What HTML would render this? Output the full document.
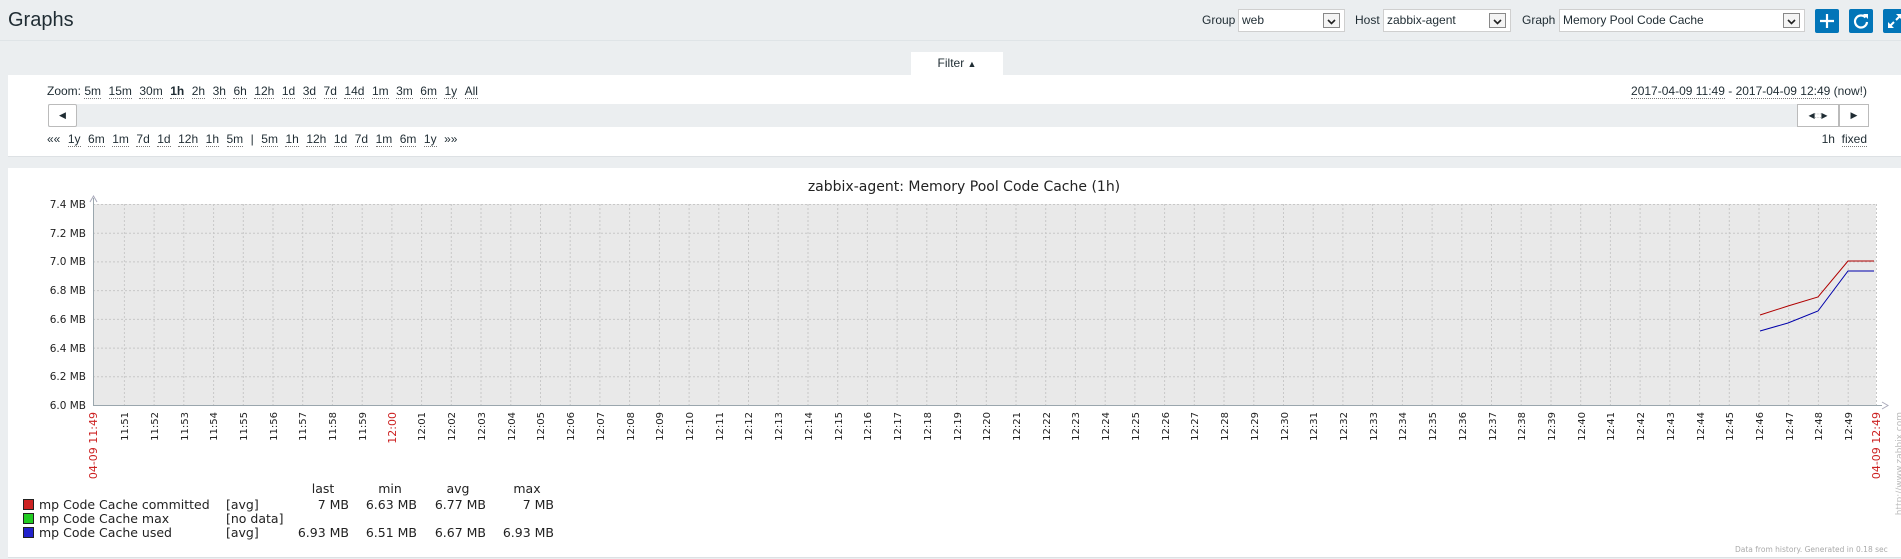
<!DOCTYPE html>
<html><head><meta charset="utf-8"><style>
*{box-sizing:border-box;margin:0;padding:0}
body{width:1901px;height:559px;background:#ebeef0;font-family:"Liberation Sans",Arial,sans-serif;font-size:12px;color:#1f2c33;position:relative;overflow:hidden}
.a{position:absolute}
h1{position:absolute;left:8px;top:9px;font-size:20px;font-weight:normal;color:#1f2c33}
.hline{left:0;top:40px;width:1901px;height:1px;background:#dfe4e7}
.sel{position:absolute;top:9px;height:23px;background:#fff;border:1px solid #cfcfcf;font-size:12px;line-height:21px;padding-left:3px}
.sel .ar{position:absolute;right:4px;top:3px;width:17px;height:15px;border:1px solid #888;background:#f4f4f4}
.lbl{position:absolute;top:9px;line-height:23px}
.btn{position:absolute;top:9px;width:24px;height:24px;background:#0275b8;border-radius:2px}
.box{background:#fff;border-bottom:1px solid #dde1e4}
.u{border-bottom:1px dotted #777}
.zr span{margin-right:7.5px}
</style></head><body>
<h1>Graphs</h1>
<div class="a hline"></div>
<div class="lbl" style="left:1202px">Group</div>
<div class="sel" style="left:1238px;width:107px">web<div class="ar"><svg width="15" height="13"><path d="M4 5l3.5 3.5L11 5" stroke="#222" stroke-width="1.6" fill="none"/></svg></div></div>
<div class="lbl" style="left:1355px">Host</div>
<div class="sel" style="left:1383px;width:128px">zabbix-agent<div class="ar"><svg width="15" height="13"><path d="M4 5l3.5 3.5L11 5" stroke="#222" stroke-width="1.6" fill="none"/></svg></div></div>
<div class="lbl" style="left:1522px">Graph</div>
<div class="sel" style="left:1559px;width:246px">Memory Pool Code Cache<div class="ar"><svg width="15" height="13"><path d="M4 5l3.5 3.5L11 5" stroke="#222" stroke-width="1.6" fill="none"/></svg></div></div>
<div class="btn" style="left:1815px"><svg width="24" height="24"><path d="M12 5v14M5 12h14" stroke="#fff" stroke-width="2.2"/></svg></div>
<div class="btn" style="left:1849px"><svg width="24" height="24"><path d="M16.5 8.5A6 6 0 1 0 18 13" stroke="#fff" stroke-width="2.2" fill="none"/><path d="M14 5h5v5z" fill="#fff"/></svg></div>
<div class="btn" style="left:1883px"><svg width="24" height="24"><path d="M6 18l5-5M18 6l-5 5" stroke="#fff" stroke-width="2"/><path d="M5 19v-6l6 6zM19 5v6l-6-6z" fill="#fff"/></svg></div>

<div class="a" style="left:911px;top:52px;width:92px;height:24px;background:#fff;text-align:center;line-height:23px;font-size:12px">Filter <span style="font-size:9px">&#9650;</span></div>
<div class="a box" style="left:8px;top:75px;width:1893px;height:82px"></div>
<div class="a zr" style="left:47px;top:84px;line-height:14px">Zoom: <span class="u">5m</span><span class="u">15m</span><span class="u">30m</span><span class="u" style="font-weight:bold">1h</span><span class="u">2h</span><span class="u">3h</span><span class="u">6h</span><span class="u">12h</span><span class="u">1d</span><span class="u">3d</span><span class="u">7d</span><span class="u">14d</span><span class="u">1m</span><span class="u">3m</span><span class="u">6m</span><span class="u">1y</span><span class="u">All</span></div>
<div class="a" style="right:34px;top:84px;line-height:14px"><span class="u">2017-04-09 11:49</span> - <span class="u">2017-04-09 12:49</span> (now!)</div>
<div class="a" style="left:48px;top:104px;width:1820px;height:23px;background:#ebeef0"></div>
<div class="a" style="left:48px;top:104px;width:29px;height:23px;background:#fff;border:1px solid #bbb;border-radius:2px;font-size:9px;text-align:center;line-height:21px">&#9664;</div>
<div class="a" style="left:1797px;top:104px;width:42px;height:23px;background:#fff;border:1px solid #bbb;font-size:8px;text-align:center;line-height:21px">&#9664;<span style="color:#999">:::</span>&#9654;</div>
<div class="a" style="left:1839px;top:104px;width:30px;height:23px;background:#fff;border:1px solid #bbb;font-size:9px;text-align:center;line-height:21px">&#9654;</div>
<div class="a zr" style="left:47px;top:132px;line-height:14px"><span>&laquo;&laquo;</span><span class="u">1y</span><span class="u">6m</span><span class="u">1m</span><span class="u">7d</span><span class="u">1d</span><span class="u">12h</span><span class="u">1h</span><span class="u">5m</span><span>|</span><span class="u">5m</span><span class="u">1h</span><span class="u">12h</span><span class="u">1d</span><span class="u">7d</span><span class="u">1m</span><span class="u">6m</span><span class="u">1y</span><span>&raquo;&raquo;</span></div>
<div class="a" style="right:34px;top:132px;line-height:14px">1h&nbsp;&nbsp;<span class="u">fixed</span></div>

<div class="a box" style="left:8px;top:168px;width:1893px;height:390px"></div>
<svg class="a" style="left:0;top:0" width="1901" height="559" font-family="DejaVu Sans,sans-serif">
<text x="964" y="191" font-size="14" text-anchor="middle" fill="#222">zabbix-agent: Memory Pool Code Cache (1h)</text>
<rect x="93" y="204" width="1783" height="201" fill="#e9e9e9"/>
<g stroke="#c8c8c8" stroke-dasharray="2,2" stroke-width="1">
<path d="M93 204.5H1876M93 233.2H1876M93 261.9H1876M93 290.6H1876M93 319.4H1876M93 348.1H1876M93 376.8H1876M1876.5 204V405"/>
<path d="M124.4 204V405M154.1 204V405M183.8 204V405M213.6 204V405M243.3 204V405M273 204V405M302.7 204V405M332.4 204V405M362.2 204V405M391.9 204V405M421.6 204V405M451.3 204V405M481 204V405M510.8 204V405M540.5 204V405M570.2 204V405M599.9 204V405M629.6 204V405M659.4 204V405M689.1 204V405M718.8 204V405M748.5 204V405M778.2 204V405M808 204V405M837.7 204V405M867.4 204V405M897.1 204V405M926.8 204V405M956.6 204V405M986.3 204V405M1016 204V405M1045.7 204V405M1075.4 204V405M1105.2 204V405M1134.9 204V405M1164.6 204V405M1194.3 204V405M1224 204V405M1253.8 204V405M1283.5 204V405M1313.2 204V405M1342.9 204V405M1372.6 204V405M1402.4 204V405M1432.1 204V405M1461.8 204V405M1491.5 204V405M1521.2 204V405M1551 204V405M1580.7 204V405M1610.4 204V405M1640.1 204V405M1669.8 204V405M1699.6 204V405M1729.3 204V405M1759 204V405M1788.7 204V405M1818.4 204V405M1848.2 204V405"/>
</g>
<path d="M93.5 198V405.5H1882" stroke="#9aa6ad" fill="none"/>
<path d="M90 202l3.5-6 3.5 6M1882 402l6 3.5-6 3.5" stroke="#aab" fill="none"/>
<polyline points="1760,315 1788,306 1818,297 1848,261 1874,261" stroke="#b00000" fill="none"/>
<polyline points="1760,331 1788,323 1818,311 1848,271 1874,271" stroke="#0000aa" fill="none"/>
<g font-size="10.5" fill="#222" text-anchor="end">
<text x="86" y="208">7.4 MB</text><text x="86" y="237">7.2 MB</text><text x="86" y="265">7.0 MB</text><text x="86" y="294">6.8 MB</text><text x="86" y="323">6.6 MB</text><text x="86" y="352">6.4 MB</text><text x="86" y="380">6.2 MB</text><text x="86" y="409">6.0 MB</text>
</g>
<g font-size="10" fill="#222" text-anchor="end">
<text fill="#cc2222" font-size="11" transform="translate(97,412) rotate(-90)">04-09 11:49</text>
<text transform="translate(128,412) rotate(-90)">11:51</text><text transform="translate(158,412) rotate(-90)">11:52</text><text transform="translate(188,412) rotate(-90)">11:53</text><text transform="translate(217,412) rotate(-90)">11:54</text><text transform="translate(247,412) rotate(-90)">11:55</text><text transform="translate(277,412) rotate(-90)">11:56</text><text transform="translate(306,412) rotate(-90)">11:57</text><text transform="translate(336,412) rotate(-90)">11:58</text><text transform="translate(366,412) rotate(-90)">11:59</text>
<text fill="#cc2222" font-size="11" transform="translate(396,412) rotate(-90)">12:00</text>
<text transform="translate(425,412) rotate(-90)">12:01</text><text transform="translate(455,412) rotate(-90)">12:02</text><text transform="translate(485,412) rotate(-90)">12:03</text><text transform="translate(515,412) rotate(-90)">12:04</text><text transform="translate(544,412) rotate(-90)">12:05</text><text transform="translate(574,412) rotate(-90)">12:06</text><text transform="translate(604,412) rotate(-90)">12:07</text><text transform="translate(634,412) rotate(-90)">12:08</text><text transform="translate(663,412) rotate(-90)">12:09</text><text transform="translate(693,412) rotate(-90)">12:10</text><text transform="translate(723,412) rotate(-90)">12:11</text><text transform="translate(752,412) rotate(-90)">12:12</text><text transform="translate(782,412) rotate(-90)">12:13</text><text transform="translate(812,412) rotate(-90)">12:14</text><text transform="translate(842,412) rotate(-90)">12:15</text><text transform="translate(871,412) rotate(-90)">12:16</text><text transform="translate(901,412) rotate(-90)">12:17</text><text transform="translate(931,412) rotate(-90)">12:18</text><text transform="translate(961,412) rotate(-90)">12:19</text><text transform="translate(990,412) rotate(-90)">12:20</text><text transform="translate(1020,412) rotate(-90)">12:21</text><text transform="translate(1050,412) rotate(-90)">12:22</text><text transform="translate(1079,412) rotate(-90)">12:23</text><text transform="translate(1109,412) rotate(-90)">12:24</text><text transform="translate(1139,412) rotate(-90)">12:25</text><text transform="translate(1169,412) rotate(-90)">12:26</text><text transform="translate(1198,412) rotate(-90)">12:27</text><text transform="translate(1228,412) rotate(-90)">12:28</text><text transform="translate(1258,412) rotate(-90)">12:29</text><text transform="translate(1288,412) rotate(-90)">12:30</text><text transform="translate(1317,412) rotate(-90)">12:31</text><text transform="translate(1347,412) rotate(-90)">12:32</text><text transform="translate(1377,412) rotate(-90)">12:33</text><text transform="translate(1406,412) rotate(-90)">12:34</text><text transform="translate(1436,412) rotate(-90)">12:35</text><text transform="translate(1466,412) rotate(-90)">12:36</text><text transform="translate(1496,412) rotate(-90)">12:37</text><text transform="translate(1525,412) rotate(-90)">12:38</text><text transform="translate(1555,412) rotate(-90)">12:39</text><text transform="translate(1585,412) rotate(-90)">12:40</text><text transform="translate(1614,412) rotate(-90)">12:41</text><text transform="translate(1644,412) rotate(-90)">12:42</text><text transform="translate(1674,412) rotate(-90)">12:43</text><text transform="translate(1704,412) rotate(-90)">12:44</text><text transform="translate(1733,412) rotate(-90)">12:45</text><text transform="translate(1763,412) rotate(-90)">12:46</text><text transform="translate(1793,412) rotate(-90)">12:47</text><text transform="translate(1822,412) rotate(-90)">12:48</text><text transform="translate(1852,412) rotate(-90)">12:49</text>
<text fill="#cc2222" font-size="11" transform="translate(1880,412) rotate(-90)">04-09 12:49</text>
<text fill="#bbb" font-size="9" transform="translate(1902,412) rotate(-90)">http://www.zabbix.com</text>
</g>
<text x="1735" y="552" font-size="7.5" fill="#aaa">Data from history. Generated in 0.18 sec</text>
<g font-size="12.5" fill="#222">
<text x="323" y="493" text-anchor="middle">last</text><text x="390" y="493" text-anchor="middle">min</text><text x="458" y="493" text-anchor="middle">avg</text><text x="527" y="493" text-anchor="middle">max</text>
<rect x="23.5" y="499.5" width="10" height="10" fill="#cc2222" stroke="#222"/>
<rect x="23.5" y="513.5" width="10" height="10" fill="#22cc22" stroke="#222"/>
<rect x="23.5" y="527.5" width="10" height="10" fill="#2222cc" stroke="#222"/>
<text x="39" y="509">mp Code Cache committed</text><text x="39" y="523">mp Code Cache max</text><text x="39" y="537">mp Code Cache used</text>
<text x="226" y="509">[avg]</text><text x="226" y="523">[no data]</text><text x="226" y="537">[avg]</text>
<g text-anchor="end">
<text x="349" y="509">7 MB</text><text x="417" y="509">6.63 MB</text><text x="486" y="509">6.77 MB</text><text x="554" y="509">7 MB</text>
<text x="349" y="537">6.93 MB</text><text x="417" y="537">6.51 MB</text><text x="486" y="537">6.67 MB</text><text x="554" y="537">6.93 MB</text>
</g></g>
</svg>
</body></html>
